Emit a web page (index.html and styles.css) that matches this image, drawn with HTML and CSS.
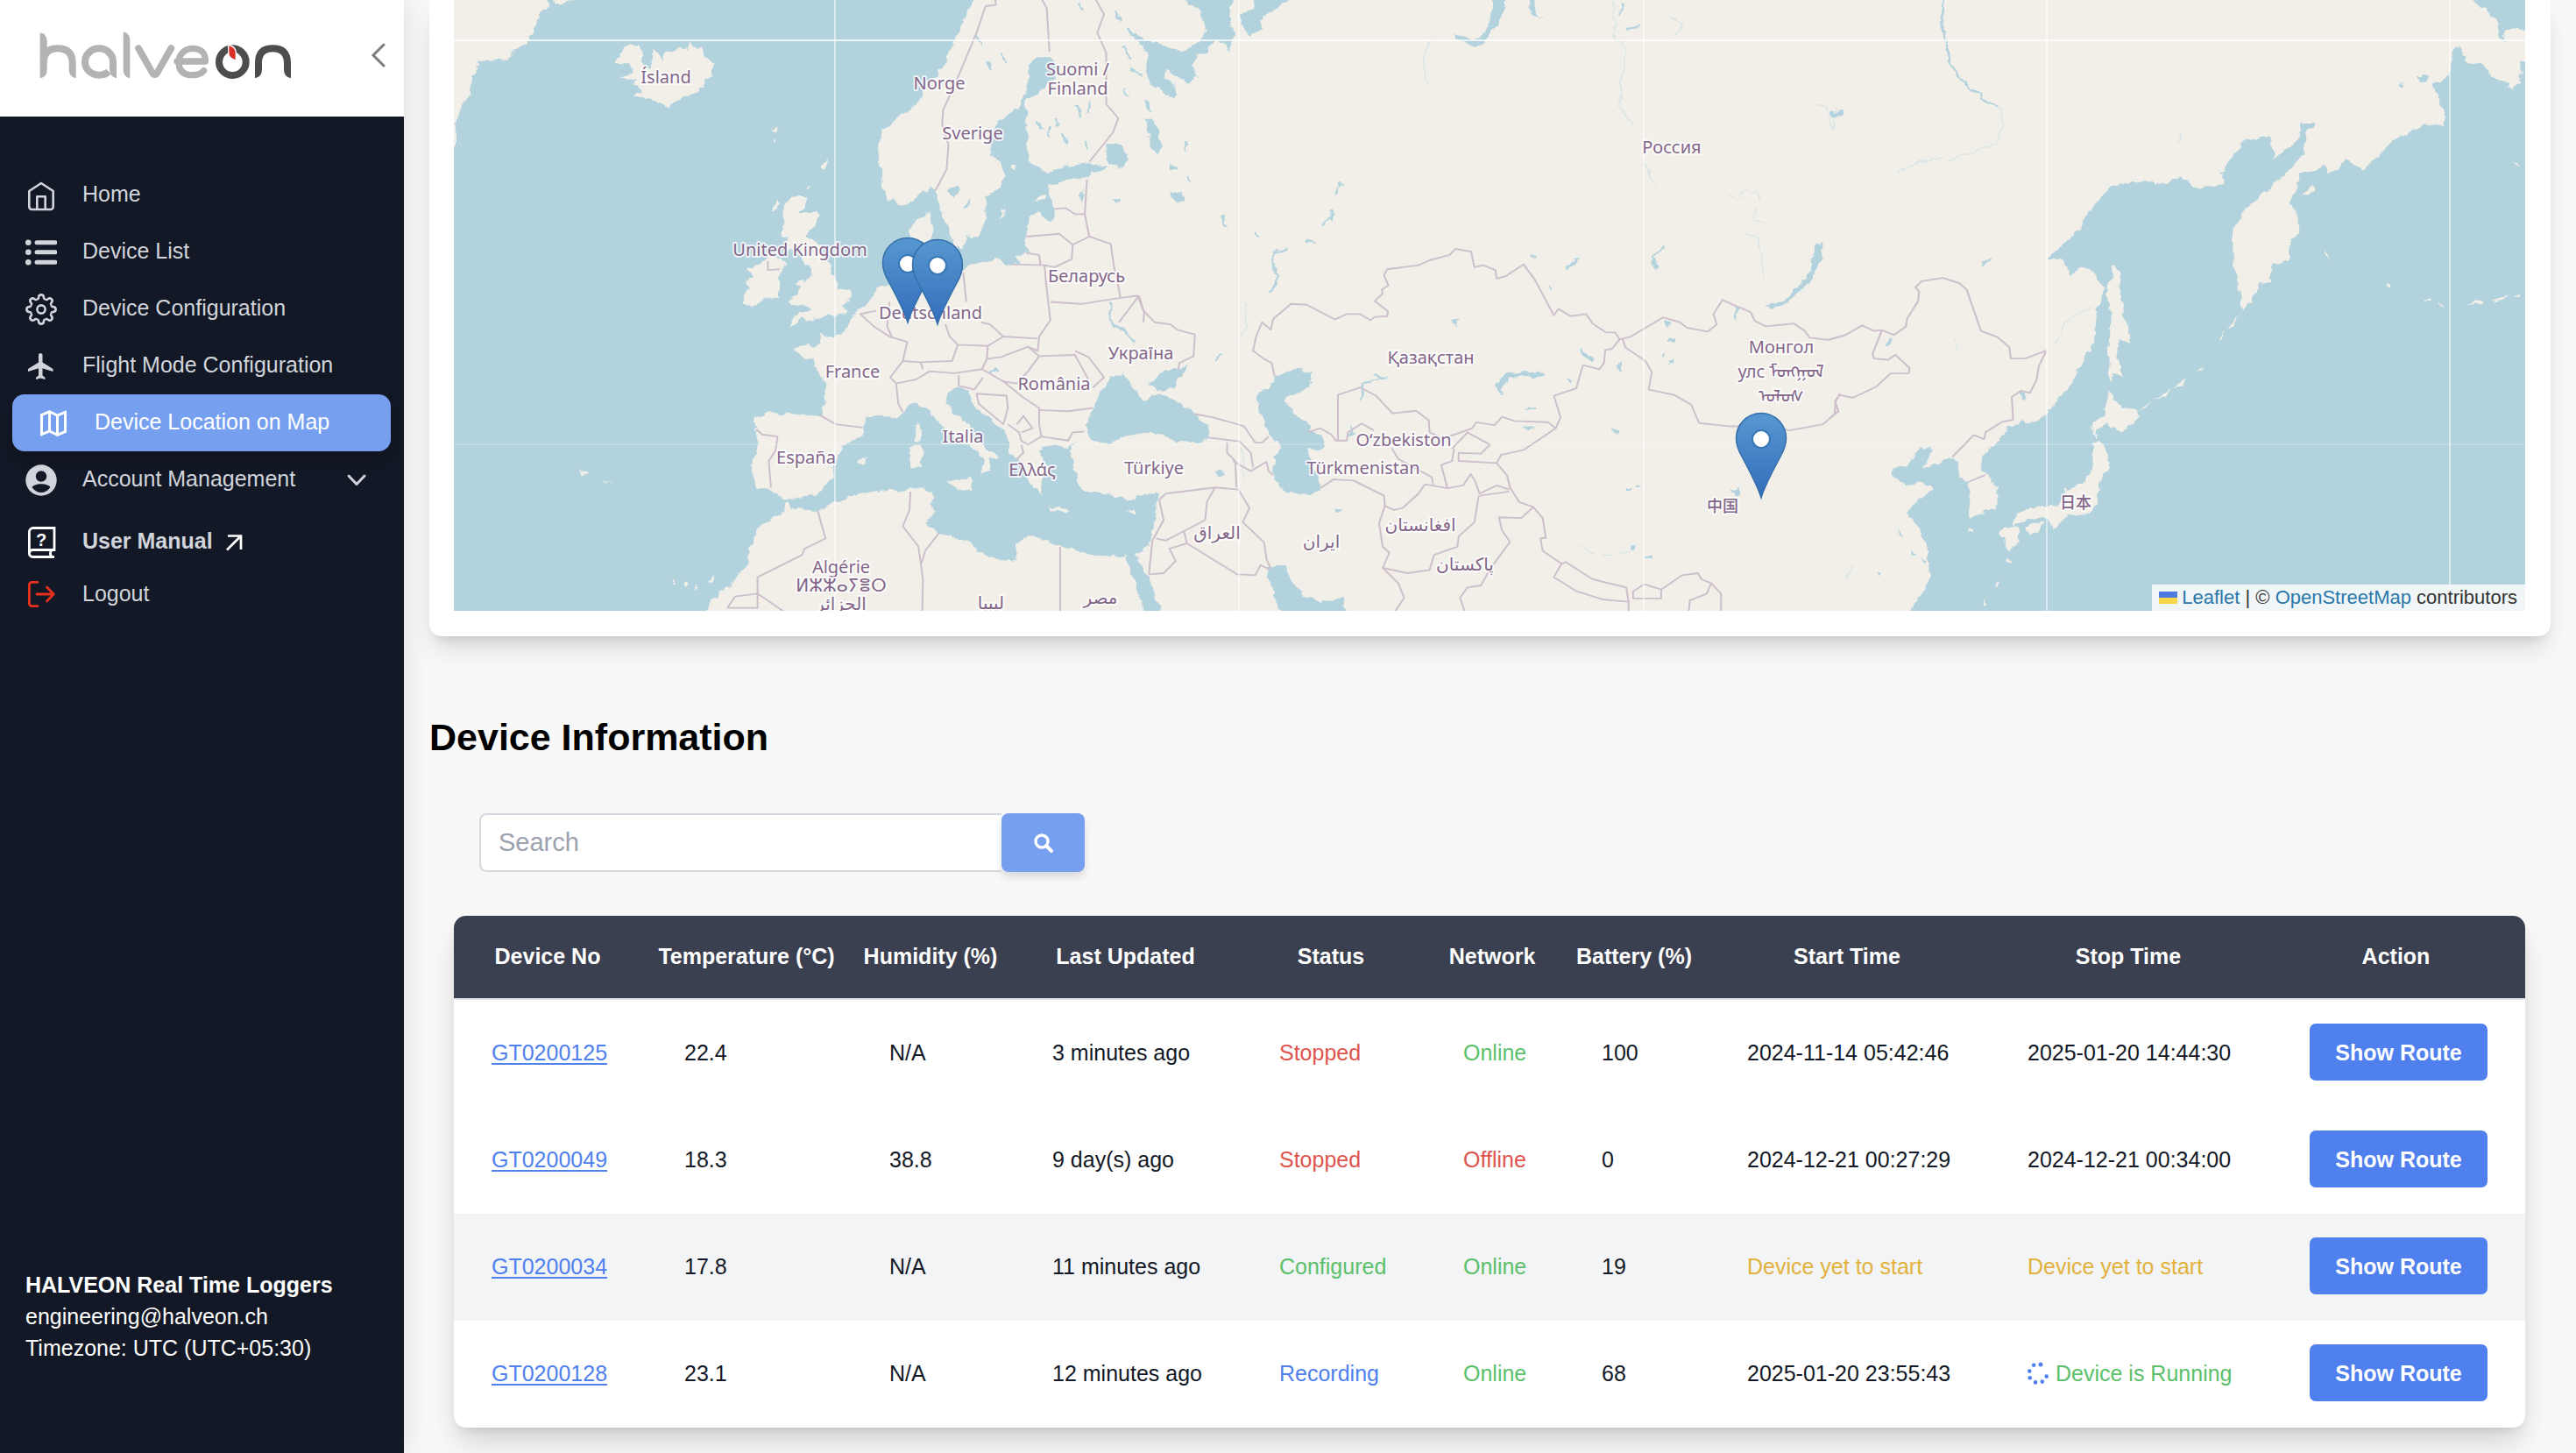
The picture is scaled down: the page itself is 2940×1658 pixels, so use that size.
FILE: index.html
```html
<!DOCTYPE html>
<html lang="en">
<head>
<meta charset="utf-8">
<meta name="viewport" content="width=device-width, initial-scale=1">
<title>Device Location on Map</title>
<link rel="stylesheet" href="styles.css">
</head>
<body>
<div class="app">
  <aside class="sidebar">
    <header class="brand">
      <svg class="logo" viewBox="132 105 870 171" role="img" aria-label="halveon" fill="none">
        <g stroke="#b3b3b3" stroke-width="24">
          <path d="M137 112Q161 116 161 142V240Q161 264 137 268Z" fill="#b3b3b3" stroke="none"/>
          <path d="M149 215Q149 166 198 166T248 215V240"/>
          <path d="M236 238H260V268Q236 264 236 238Z" fill="#b3b3b3" stroke="none"/>
          <path d="M372 245Q360 257 339 257A48 45 0 0 1 291 211A48 45 0 0 1 387 211V240"/>
          <path d="M375 236H399V268Q375 262 375 236Z" fill="#b3b3b3" stroke="none"/>
          <path d="M422 109Q445 114 445 140V268Q422 264 422 238Z" fill="#b3b3b3" stroke="none"/>
          <path d="M474 165L521 248Q530 263 539 248L586 165" stroke-width="23" stroke-linecap="round"/>
          <path d="M606 210H703Q704 166 659 166A47 46 0 0 0 612 212Q612 257 660 257Q684 257 698 242" stroke-width="22" stroke-linejoin="round" stroke-linecap="round"/>
        </g>
        <g stroke="#4d4d4d" stroke-width="24">
          <circle cx="796" cy="212" r="46"/>
          <path d="M885 240V215Q885 166 934 166T984 215V240"/>
          <path d="M873 238H897Q897 264 873 268ZM972 238H996V268Q972 264 972 238Z" fill="#4d4d4d" stroke="none"/>
        </g>
        <path d="M782 153Q808 160 808 182V207Q782 202 782 178Z" fill="#d93025" stroke="#fff" stroke-width="4"/>
      </svg>
      <button class="collapse" type="button" aria-label="Collapse sidebar">
        <svg width="18" height="28" viewBox="0 0 18 28" fill="none" stroke="#7d7d7d" stroke-width="3" stroke-linecap="round"><path d="M15 2L3 14L15 26"/></svg>
      </button>
    </header>

    <nav class="nav">
      <a class="item" href="#home">
        <svg class="icon" viewBox="0 0 36 36" fill="none" stroke="currentColor" stroke-width="2.6" stroke-linejoin="round"><path d="M4.3 13L18 4L31.7 13V31a3 3 0 0 1-3 3H7.3a3 3 0 0 1-3-3ZM13.300 34V19.300H22.700V34"/></svg>
        <span>Home</span>
      </a>
      <a class="item" href="#devices">
        <svg class="icon" viewBox="0 0 36 36" fill="none" stroke="currentColor" stroke-width="5" stroke-linecap="round"><path d="M13 6.700H34M13 17.700H34M13 29.300H34"/><path stroke-width="6.600" d="M3.300 6.700h.01M3.300 17.700h.01M3.300 29.300h.01"/></svg>
        <span>Device List</span>
      </a>
      <a class="item" href="#configuration">
        <svg class="icon" viewBox="-18 -18 36 36" fill="none" stroke="currentColor" stroke-width="2.600">
          <defs><path id="tooth" d="M-4.940-11.930C-3.200-11.300-3.100-12.800-2.900-14C-2.700-15.800-1.600-16.600 0-16.600S2.700-15.800 2.900-14C3.100-12.800 3.200-11.300 4.940-11.930"/></defs>
          <use href="#tooth"/><use href="#tooth" transform="rotate(45)"/><use href="#tooth" transform="rotate(90)"/><use href="#tooth" transform="rotate(135)"/><use href="#tooth" transform="rotate(180)"/><use href="#tooth" transform="rotate(225)"/><use href="#tooth" transform="rotate(270)"/><use href="#tooth" transform="rotate(315)"/>
          <circle r="4.600"/>
        </svg>
        <span>Device Configuration</span>
      </a>
      <a class="item" href="#flight">
        <svg class="icon" viewBox="0 0 24 24" fill="currentColor"><path d="M21 16v-2l-8-5V3.500c0-.83-.67-1.500-1.500-1.500S10 2.670 10 3.500V9l-8 5v2l8-2.500V19l-2 1.500V22l3.500-1 3.500 1v-1.500L13 19v-5.500l8 2.500z"/></svg>
        <span>Flight Mode Configuration</span>
      </a>
      <a class="item active" href="#map" aria-current="page">
        <svg class="icon" viewBox="0 0 24 24" fill="currentColor"><path d="M2 5l7-3 6 3 6.303-2.701a.5.5 0 0 1 .697.46V19l-7 3-6-3-6.303 2.701a.5.5 0 0 1-.697-.46V5zm14 14.395l4-1.714V5.033l-4 1.714v12.648zm-2-.131V6.736l-4-2v12.528l4 2zm-6-2.011V4.605L4 6.319v12.648l4-1.714z"/></svg>
        <span>Device Location on Map</span>
      </a>
      <a class="item" href="#account">
        <svg class="icon" viewBox="0 0 36 36"><circle cx="18" cy="18" r="17.700" fill="currentColor"/><circle cx="18" cy="13.500" r="6.200" fill="#121825"/><path d="M7.500 26C11 21 25 21 28.500 26C25.500 30 22 32 18 32S10.500 30 7.500 26Z" fill="#121825"/></svg>
        <span>Account Management</span>
        <svg class="caret" viewBox="0 0 24 24" fill="none" stroke="currentColor" stroke-width="3" stroke-linecap="round" stroke-linejoin="round"><path d="M3 7L12 16.500L21 7"/></svg>
      </a>
      <a class="item manual" href="#manual">
        <svg class="icon" viewBox="0 0 36 36" fill="none" stroke="#fff" stroke-width="2.800"><path d="M33 1.500V26.500H8a4 4 0 0 0-3.600 4V6a4.500 4.500 0 0 1 4.500-4.500ZM4.400 30.500a4 4 0 0 0 4 4H33M30 26.500Q27 30.500 30 34.500"/><text x="18" y="21.500" text-anchor="middle" fill="#fff" stroke="none" class="icon-mark">?</text></svg>
        <span>User Manual</span>
        <svg class="external" viewBox="0 0 20 20" fill="none" stroke="#fff" stroke-width="2.700"><path d="M2 18.500L18 2.500M3 2.500H18V18"/></svg>
      </a>
      <a class="item logout" href="#logout">
        <svg class="icon" viewBox="0 0 36 36" fill="none" stroke="#e8301f" stroke-width="2.800" stroke-linecap="round" stroke-linejoin="round"><path d="M14 4.400H7.400a3 3 0 0 0-3 3V28.600a3 3 0 0 0 3 3H14M13 18H32M24.500 10L32.300 18L24.500 26"/></svg>
        <span>Logout</span>
      </a>
    </nav>

    <footer class="about">
      <strong>HALVEON Real Time Loggers</strong>
      <span>engineering@halveon.ch</span>
      <span>Timezone: UTC (UTC+05:30)</span>
    </footer>
  </aside>

  <main class="main">
    <section class="map-card">
      <div class="map">
        <svg class="tiles" viewBox="518 0 2364 697" preserveAspectRatio="xMidYMid slice" role="img" aria-label="World map with device positions">
          <defs>
            <filter id="coast" filterUnits="userSpaceOnUse" x="480" y="-30" width="2440" height="760">
              <feTurbulence type="fractalNoise" baseFrequency="0.09" numOctaves="3" seed="4"/>
              <feDisplacementMap in="SourceGraphic" scale="9" xChannelSelector="R" yChannelSelector="G"/>
            </filter>
            <linearGradient id="pin" x1="0" y1="0" x2="0" y2="1"><stop offset="0" stop-color="#5697d0"/><stop offset="1" stop-color="#346dbb"/></linearGradient>
            <g id="marker">
              <path d="M0 0C-3-10-15-34-22-47C-26-54-28.500-60-28.500-68A28.500 28.500 0 0 1 28.500-68C28.500-60 26-54 22-47C15-34 3-10 0 0Z" fill="url(#pin)" stroke="#3470ab" stroke-width="1.500"/>
              <circle cy="-67" r="10" fill="#fff" stroke="#3a77b5" stroke-width="2"/>
            </g>
          </defs>
          <rect x="480" y="-30" width="2440" height="760" fill="#b2d2dd"/>
          <g filter="url(#coast)">
            <g transform="scale(.5102 .4655) translate(999.600 0)" class="land">
              <path d="M-30-60H222V0L228 15L205 35L200 60L182 95L160 115L135 145L100 150L70 150L65 175L55 190L52 235L35 265L22 300L18 360L-30 400ZM230-40L285-40L285 0L240 12Z"/>
              <path d="M395 118L412 103L430 112L440 135L432 150L445 170L458 165L462 125L475 130L482 150L490 125L505 130L520 115L538 125L543 100L560 120L570 115L580 140L597 155L595 185L580 195L575 210L550 230L520 242L495 262L465 250L440 238L415 240L432 222L432 212L415 208L425 195L388 190L418 180L410 155L380 155Z"/>
              <path d="M722 318L740 310L738 325ZM730 335L737 350L732 350ZM838 415L852 385L852 400L843 420ZM805 465L815 455L812 470Z"/>
              <path d="M770 480L806 482L800 505L785 520L833 522L825 550L808 570L800 585L825 590L840 625L860 650L872 690L875 705L903 708L905 725L890 745L880 752L898 760L890 772L850 775L832 782L808 788L790 783L780 795L762 803L768 790L785 768L815 762L812 750L785 750L765 742L785 722L788 700L778 692L815 685L812 655L800 640L790 610L760 620L755 600L765 580L750 575L752 520Z"/>
              <path d="M715 630L745 628L760 645L745 665L745 700L742 728L715 735L685 752L662 745L665 725L678 700L665 690L690 680L670 655L700 650ZM722 515L742 485L745 500L725 520Z"/>
              <path d="M1600-60H1180V0L1165 25L1150 60L1135 100L1120 135L1110 165L1090 195L1070 225L1045 260L1005 290L970 325L965 370L972 430L975 460L990 490L1020 505L1045 495L1065 470L1088 462L1098 475L1100 500L1115 540L1125 575L1135 600L1155 608L1165 580L1190 578L1205 540L1208 480L1235 460L1250 430L1240 405L1220 385L1215 350L1225 310L1250 285L1280 260L1300 210L1300 160L1320 140L1350 140L1372 165L1350 200L1325 225L1298 245L1295 290L1300 340L1298 395L1345 425L1390 408L1440 398L1475 410L1430 435L1400 437L1345 455L1345 480L1360 510L1358 535L1345 545L1325 520L1305 530L1295 555L1292 590L1300 620L1270 630L1285 645L1255 650L1230 632L1180 648L1155 660L1110 665L1080 640L1075 600L1085 570L1080 520L1050 540L1035 560L1035 590L1045 640L1030 690L985 700L965 700L955 725L940 750L905 770L900 800L880 815L865 828L835 820L840 845L778 852L780 868L820 885L830 915L845 930L848 970L840 1015L800 1020L720 1010L685 1025L698 1060L690 1110L682 1150L690 1198L725 1200L745 1215L760 1225L800 1215L830 1212L845 1190L868 1170L865 1140L885 1095L930 1068L935 1025L960 1015L1005 1025L1020 1010L1050 985L1075 1000L1100 1035L1140 1080L1190 1105L1200 1125L1195 1165L1215 1155L1210 1125L1238 1120L1205 1095L1180 1080L1165 1040L1125 1000L1115 965L1140 948L1165 955L1175 985L1215 1025L1250 1060L1260 1110L1290 1135L1300 1180L1330 1215L1330 1180L1350 1150L1335 1130L1325 1100L1350 1090L1390 1095L1405 1085L1425 1060L1395 1100L1400 1150L1420 1200L1470 1210L1530 1225L1600 1205Z"/>
              <path d="M760 1230L770 1245L830 1250L890 1220L960 1205L1050 1200L1065 1195L1090 1210L1085 1235L1090 1260L1072 1280L1100 1308L1170 1325L1185 1350L1250 1380L1270 1370L1275 1330L1310 1312L1360 1335L1440 1360L1500 1365L1600 1345V1560H560L590 1470L635 1430L675 1380L675 1350L700 1290L740 1265Z"/>
              <path d="M1035 1090L1060 1088L1065 1110L1058 1145L1040 1148ZM1045 1055L1058 1035L1058 1080L1048 1078ZM1120 1180L1175 1170L1172 1208L1130 1190ZM1345 1242L1395 1252L1390 1260L1350 1252ZM1520 1255L1550 1245L1540 1262ZM918 1128L942 1122L932 1138ZM508 1415L514 1430L508 1430ZM530 1428L540 1428L536 1440ZM552 1434L562 1440L554 1446ZM582 1428L600 1410L594 1428ZM290 1155L325 1155L300 1165ZM350 1178L368 1182L352 1184ZM1235 540L1250 508L1246 530ZM1308 492L1335 478L1332 495ZM1262 404L1274 404L1270 416ZM1120 610L1145 600L1145 640Z"/>
            </g>
            <path d="M1300-30H2100V730H1300Z" class="land"/>
            <path d="M2095-30H2920V730H2095Z" class="land"/>
            <g transform="scale(.5102 .4655) translate(999.600 0)" class="sea">
              <path d="M1475 355L1500 345L1530 390L1515 410L1480 400ZM1120 470L1145 450L1150 465L1130 485ZM1155 510L1172 485L1165 512ZM1410 480L1422 465L1424 495ZM1490 488L1504 488L1498 500Z"/>
              <path d="M1320 300l14 20M1350 310l-5 26M1378 325l8 30M1410 260l8 30M1440 250l-6 28M1360 290l5 18M1425 345l5 18M1510 110l20 35M1495 30l14 26M1530 170l25 20M1410 10l12 14M1515 215l10 20M1180 90l14 22M1210 150l8 22M1240 130l10 20" class="stream"/>
              <path d="M1484 740V785L1540 835M1218 910L1234 905" class="stream"/>
              <path d="M1520 1365L1545 1440L1568 1420" class="stream"/>
            </g>
            <path class="sea" transform="translate(1220 0) scale(.3333)" d="M398-90V0L455 40L468 80L470 105L445 145L420 165L380 174L330 160L285 145L240 120L200 92L195 100L240 150L272 185L262 230L275 290L310 300L350 338L370 325L365 300L325 265L335 240L375 265L420 285L440 262L422 215L450 185L480 170L497 137L540 155L557 180L555 145L568 110L550 80L560 0V-90Z"/>
            <g transform="scale(.5102 .4655) translate(2548 0)" class="sea">
              <path d="M-118 1040L-103 1000L-83 950L-58 920L-33 918L-20 945L-3 960L10 985L40 965L60 968L90 985L125 1015L155 1045L158 1070L135 1088L95 1085L50 1065L20 1060L-20 1065L-68 1085L-108 1080ZM20 940L50 912L108 898L85 930L78 950L40 958Z"/>
              <path d="M-10 1215L45 1208L38 1260L20 1340L-10 1360ZM-30 1350L-10 1350L30 1440L62 1530L20 1530L-5 1450Z"/>
              <path d="M255-60L360-60L335 0L310 20L280 40L275 75L245 82L228 60L230 35L258 20ZM790-60L820-60L822 20L800 60L775 95L770 112L735 108L710 95L708 80L740 95L765 90L790 40ZM870-20L885-20L885 30L902 42L875 35Z"/>
              <path d="M15 290L35 300L52 360L40 378L25 350ZM70 465L95 475L102 495L85 498ZM70 405h14v12h-14ZM10 245l12 10l6 20l-14-10Z"/>
              <path d="M345 905L385 910L383 950L345 965L325 980L355 1020L380 1045L380 1060L410 1070L418 1095L395 1102L380 1100L382 1145L405 1160L405 1205L362 1213L320 1200L300 1165L302 1120L318 1100L290 1060L275 1020L262 980L285 950L310 920Z"/>
              <path d="M465 1070L474 1045L482 1060ZM795 945L820 915L905 912L908 922L830 925L808 950L812 968ZM855 1050L885 1040L885 1048L865 1056ZM1402 748L1440 740L1475 700L1500 670L1512 600L1530 595L1522 650L1502 690L1472 717L1440 752L1415 756ZM285 1395L325 1385L345 1430L370 1460L420 1475L455 1462L472 1530L330 1530L300 1450Z"/>
              <path d="M985 855L1020 878L1015 888L990 870ZM1172 785L1194 788L1186 806ZM1332 750L1344 752L1337 790ZM955 925L968 930L965 944ZM1186 828h14v10h-14ZM1168 868l8-2v16ZM1186 880h10v8h-10ZM1068 890h10v18h-8ZM170 1155h22v8h-18ZM438 1248h18v8h-16ZM1325 1200l14-6l4 16l-12 4ZM1060 1055h14v10h-12ZM1090 1195h10v6h-10ZM1100 1335h12v14h-12ZM1134 1364h14v8h-14ZM1112 1190h12v6h-12ZM700 785l14-4l-4 18ZM914 694l10 18l-8-4Z"/>
              <path d="M330 610L300 620L298 655L312 680L290 720M435 515L430 540L410 550M455 450L440 480M185 865L170 885M525 915L550 925L500 945L495 980M985 635L955 660M1175 600L1150 630L1158 660M372 590L395 595M258 570L270 580M187 530l4 26M880 625l10 12M868 1003L888 1003M105 350v20M110 430l8 12M1085 10l-10 30M1090 70l30-4" class="stream"/>
              <path d="M240 745L238 800L225 830M230 1095L235 1190M990 1340l30 18M1040 1362l20-4M1070 1360l30-8M1315 480L1345 485L1350 465L1385 470L1388 490M1380 510L1378 540L1398 545M1360 575L1385 580L1395 640L1398 680M1060 0L1065 95L1088 120L1080 200L1075 262L1108 315M655 95L640 120L635 170L642 205M1130 400L1155 455M1510 250L1540 265L1550 320L1560 260M1190 40L1215 60L1200 90" class="brook"/>
            </g>
            <g transform="scale(.5421 .4719) translate(3855.400 0)" class="sea">
              <path d="M1350-60V0L1375 20L1400 50L1405 95L1418 100L1420 70L1530 75V-60Z"/>
              <path d="M1310 120L1325 112L1335 150L1375 155L1390 185L1435 215L1452 200L1450 150L1530 155V1550H130L165 1477L200 1420L208 1380L200 1310L175 1260L158 1240L180 1205L218 1185L190 1165L155 1175L130 1150L128 1130L160 1125L190 1080L210 1085L195 1138L215 1120L250 1110L270 1115L268 1155L290 1165L290 1250L325 1240L350 1220L348 1180L315 1125L320 1100L352 1070L372 1035L400 1015L425 1025L455 1000L515 910L520 890L552 840L560 750L575 700L550 655L525 645L500 670L490 630L458 622L520 555L560 490L590 450L640 438L700 445L735 427L770 455L830 445L818 420L865 345L925 330L930 385L985 340L990 295L1020 300L1000 320L995 375L920 460L870 510L848 550L843 605L855 680L865 755L895 710L900 685L925 685L930 640L965 630L962 600L985 560L980 510L965 490L990 420L1040 400L1045 420L1085 388L1120 412L1180 345L1250 300L1290 305L1297 285L1285 260L1265 205L1300 185Z"/>
              <path d="M315 630L338 628L318 645ZM115 835L125 815L130 825L120 840ZM398 945L412 950L408 968L400 965ZM1194 200h12v10h-10ZM1236 182h18v16h-12ZM0 270h22v10h-22ZM140 1280l8 20l-6-4ZM170 1330l10 10l-8 4ZM95 1380l12 6l-4 10ZM185 1350h14v10Z"/>
              <path d="M238-20L230 40L240 100L250 150L270 190L300 220L330 250L350 255" class="stream"/>
              <path d="M350 255L360 305L350 345L290 370L250 387L190 390L140 420M740 320L725 345M550 740L495 775L470 835M260 820V845M30 1400L45 1370" class="brook"/>
            </g>
            <g transform="scale(.5421 .4719) translate(3855.400 0)" class="land">
              <path d="M597 640L607 660L610 720L630 830L605 820L600 870L615 915L597 905L587 925L585 850L590 760L580 700ZM583 942L610 985L645 990L650 1010L610 1045L580 1025L552 1045L548 1025L575 1005ZM565 1060L585 1100L582 1135L565 1165L560 1220L540 1245L500 1245L470 1280L455 1250L410 1255L380 1270L390 1245L420 1228L470 1222L500 1185L530 1165L550 1130L552 1075ZM352 1285L375 1270L398 1280L390 1315L370 1340L365 1300ZM408 1275L447 1260L440 1275L415 1297ZM550 1045L556 1030L560 1060ZM288 1278h14v8h-12Z"/>
              <path d="M835 795L860 762L850 785ZM675 972L716 938L705 955ZM722 942L748 914L738 935ZM650 995L668 968L662 985ZM815 828L830 800L824 822ZM770 900L785 880L778 896ZM1036 602L1052 630L1042 622ZM992 478L1015 448L1015 462ZM1162 690h16v8h-10ZM1335 735L1372 728L1370 738ZM1385 728L1410 720L1430 714L1410 726ZM1250 724h12v5h-12ZM1278 732l16 12l-14-6ZM1440 714h10v4h-10ZM1435 388l14 14l-6-2ZM318 1465l10-20l-4 16ZM345 1415l8-10l-2 12ZM368 1355h10v6h-10ZM490 1180h6v14h-6Z"/>
            </g>
          </g>
          <g class="borders">
            <g transform="scale(.5102 .4655) translate(999.600 0)">
              <path d="M1225-20L1228 12L1205 15L1185 80L1145 185L1110 270L1108 305L1122 355L1118 415L1093 467M1327-10L1342 20L1348 127M1447-10L1470 35L1455 80L1475 130L1475 255L1502 290L1490 325L1437 397M1432 440L1427 525L1437 580L1400 600L1370 573L1297 580M1360 512L1385 510L1405 525L1427 525M1437 580L1485 598L1492 650L1507 730L1420 745L1350 740M1400 600L1398 635L1360 655L1337 650L1265 648M1337 650L1340 690L1350 785L1325 825L1322 860L1300 850M1507 730L1545 725L1560 765L1558 790M1295 620L1325 625L1328 650"/>
              <path d="M1155 668L1162 740M1115 795L1125 825L1143 845L1210 848L1245 825L1215 795L1195 790M1245 825L1322 830M1210 848L1208 880L1240 875L1300 850L1325 873L1300 910L1275 940L1245 935L1197 905L1208 880M1143 845L1130 885L1080 887L1060 888L1020 885L1030 838L990 825L955 800L925 770L960 762M990 740L985 800L995 825M1020 885L992 925L1005 940L1050 930L1080 910L1135 915L1197 905M1060 888L1065 905M1005 940L1010 990L1020 1010M835 1018L870 1040L930 1048M692 1052L705 1065L740 1070L735 1105L720 1130L725 1195"/>
              <path d="M1145 920V945L1180 955L1200 925M1185 965L1252 970L1255 1000L1245 1040L1190 990ZM1325 1005L1390 1008L1445 1000M1245 935L1290 975L1325 1000V1040L1330 1070L1300 1090L1285 1080L1280 1060L1255 1040M1275 1040L1290 1020L1310 1050L1285 1060M1285 1090L1290 1110L1275 1125M1330 1070L1390 1080L1400 1060L1425 1058M1325 873L1405 870L1435 930M1405 860L1435 875L1470 925L1445 950M718 640V662L745 660"/>
              <path d="M830 1253L847 1320L800 1345L795 1360L695 1415V1490L628 1490L645 1462L695 1455L755 1500M1037 1205L1035 1250L1020 1290L1055 1340L1065 1420L1063 1520M1100 1308L1070 1350L1062 1380M1372 1340V1520"/>
            </g>
            <g transform="scale(.5102 .4655) translate(2548 0)">
              <path d="M303 922L297 890L280 880L255 860L262 825L275 790L295 808L300 782L340 745L375 747L438 783L465 770L495 770L518 785L527 777L555 775L557 763L527 738L545 720L543 710L558 700L548 675L555 660L625 650L650 638L695 625L708 610L743 617L750 655L770 650L797 662L800 683L820 677L860 648L885 685L928 773L938 757L965 775L1000 770L1015 793L1045 815L1065 815L1075 832L1058 855L1043 858L1040 890L1030 905L993 895L978 952L928 970L943 1023L932 1050"/>
              <path d="M1075 832L1100 825L1172 778L1210 790L1225 803L1272 813L1292 795L1285 770L1305 735L1335 750L1368 765L1378 787L1402 800L1465 793L1490 812L1500 828L1540 833L1568 825M1082 832L1088 852L1133 885L1147 912L1140 955L1197 968L1235 992L1253 1037L1320 1045L1400 1045L1455 1055L1530 1040L1556 1015L1558 985L1568 965"/>
              <path d="M445 1080V968L495 950L530 970L567 1013L620 1007L648 1030L650 1060L680 1075L745 1050M445 1080H465L467 1060L498 1038L525 1055M378 1060L405 1050L430 1065L440 1080H465M565 1098L580 1125L655 1170L658 1190M745 1050L755 1035L795 1042L812 1022L840 1032L915 1035L932 1050M700 1100L735 1060L785 1090L765 1112L715 1110V1130L800 1135M932 1050L885 1085L860 1103L810 1115L800 1135L823 1165L830 1195L850 1230L882 1243L903 1270L910 1318L898 1320L903 1350L945 1382L955 1378L1015 1420L1090 1440L1095 1475L1040 1470L980 1450L928 1415L945 1382"/>
              <path d="M405 1197L435 1175L480 1178L548 1215L550 1240L570 1250L590 1245L625 1210L640 1187L690 1197L725 1190L742 1162L752 1180L762 1210L800 1190L828 1200M828 1205L762 1215M550 1240L537 1283L545 1340L560 1355L545 1392L600 1405L650 1397L660 1360L712 1340L715 1315L750 1280L760 1215M545 1392L580 1430L593 1465L560 1520M882 1243L855 1270L805 1268L812 1300L830 1328L785 1395L765 1435L735 1440L718 1465L735 1520M690 1197L676 1140L700 1130L705 1100"/>
              <path d="M125 1015L165 1023L235 1045L260 1085L275 1085L290 1070M158 1073L225 1082L250 1110L255 1145M197 1085V1110L215 1130L218 1195M210 1130L250 1155L285 1132L290 1155L300 1165M45 1225L60 1210L170 1195L222 1200L247 1245L232 1280L280 1330L285 1370L295 1395M170 1195L152 1230L148 1275L60 1325L38 1320M100 1300L107 1332L68 1345L82 1375L55 1405L22 1408M107 1332L220 1408L260 1410L272 1385L290 1395M22 1408L30 1325L55 1275L45 1225M0 725L10 762L35 790L70 795L85 808L125 820L122 873L90 890L88 905M-45 790L0 725"/>
              <path d="M1105 1450L1130 1432L1168 1445V1467L1105 1467ZM1168 1445L1215 1410L1250 1405L1258 1420L1280 1430L1270 1455L1232 1472L1228 1520M1280 1430L1302 1455V1520M1095 1475V1520"/>
            </g>
            <g transform="scale(.5421 .4719) translate(3855.400 0)">
              <path d="M-5 822L30 810L65 787L90 800L107 798L132 810L157 790L160 770L183 728L185 705L177 695L190 680L235 672L270 685L285 700L315 800L350 815L375 840L378 867L408 867L453 848L437 885L432 920L418 950L400 945L380 960L383 1015L360 1020L325 1045L322 1062L300 1052L255 1105M107 798L87 855L90 867L120 870L135 858L165 890L163 903L125 903L95 935L45 962L18 955L8 970L15 995L-2 1010M290 1165L325 1148"/>
            </g>
          </g>
          <g stroke="#fff" fill="none" stroke-width="2">
            <path d="M518 46H2882" opacity=".75"/>
            <path d="M953 0V697M1414 0V697M1876 0V697M2336 0V697M2796 0V697" opacity=".55"/>
            <path d="M518 507H2882" opacity=".2"/>
          </g>
          <g class="labels">
            <text x="760" y="95">Ísland</text>
            <text x="1072" y="102">Norge</text>
            <text x="1110" y="159">Sverige</text>
            <text x="1230" y="86">Suomi /</text>
            <text x="1230" y="108">Finland</text>
            <text x="913" y="292">United Kingdom</text>
            <text x="1062" y="364">Deutschland</text>
            <text x="1240" y="322">Беларусь</text>
            <text x="1302" y="410">Україна</text>
            <text x="973" y="431">France</text>
            <text x="1203" y="445">România</text>
            <text x="1099" y="505">Italia</text>
            <text x="920" y="529">España</text>
            <text x="1178" y="543">Ελλάς</text>
            <text x="1317" y="541">Türkiye</text>
            <text x="960" y="654">Algérie</text>
            <text x="960" y="675">ⵍⵣⵣⴰⵢⴻⵔ</text>
            <text x="960" y="696">الجزائر</text>
            <text x="1131" y="695">ليبيا</text>
            <text x="1256" y="689">مصر</text>
            <text x="1908" y="175">Россия</text>
            <text x="1633" y="415">Қазақстан</text>
            <text x="2033" y="403">Монгол</text>
            <text x="2033" y="431">улс ᠮᠣᠩᠭᠣᠯ</text>
            <text x="2033" y="459">ᠤᠯᠤᠰ</text>
            <text x="1602" y="509">Oʻzbekiston</text>
            <text x="1556" y="541">Türkmenistan</text>
            <text x="1389" y="615">العراق</text>
            <text x="1508" y="625">ایران</text>
            <text x="1621" y="606">افغانستان</text>
            <text x="1672" y="651">پاکستان</text>
            <text x="1966" y="584" class="cjk">中国</text>
            <text x="2369" y="580" class="cjk">日本</text>
          </g>
          <use href="#marker" x="1036" y="368"/>
          <use href="#marker" x="1070" y="370"/>
          <use href="#marker" x="2010" y="568"/>
        </svg>
        <p class="attribution">
          <svg class="flag" viewBox="0 0 21 14"><path fill="#4c7be1" d="M0 0h21v7H0z"/><path fill="#f8d648" d="M0 7h21v7H0z"/></svg>
          <span><a href="#leaflet">Leaflet</a> | © <a href="#osm">OpenStreetMap</a> contributors</span>
        </p>
      </div>
    </section>

    <h1 class="title">Device Information</h1>

    <div class="content">
      <form class="search" role="search">
        <input class="search-input" type="search" placeholder="Search" aria-label="Search">
        <button class="search-button" type="button" aria-label="Search devices">
          <svg width="22" height="22" viewBox="0 0 22 22" fill="none" stroke="#fff" stroke-linecap="round"><circle cx="9" cy="9" r="7" stroke-width="3.400"/><path d="M14.500 14.500L20 20" stroke-width="4"/></svg>
        </button>
      </form>

      <table class="devices">
        <colgroup>
          <col class="c-device"><col class="c-temp"><col class="c-hum"><col class="c-upd"><col class="c-status"><col class="c-net"><col class="c-bat"><col class="c-start"><col class="c-stop"><col class="c-action">
        </colgroup>
        <thead>
          <tr><th scope="col">Device No</th><th scope="col">Temperature (°C)</th><th scope="col">Humidity (%)</th><th scope="col">Last Updated</th><th scope="col">Status</th><th scope="col">Network</th><th scope="col">Battery (%)</th><th scope="col">Start Time</th><th scope="col">Stop Time</th><th scope="col">Action</th></tr>
        </thead>
        <tbody>
          <tr><td><a href="#GT0200125">GT0200125</a></td><td>22.4</td><td>N/A</td><td>3 minutes ago</td><td class="red">Stopped</td><td class="green">Online</td><td>100</td><td>2024-11-14 05:42:46</td><td>2025-01-20 14:44:30</td><td><button class="route" type="button">Show Route</button></td></tr>
          <tr><td><a href="#GT0200049">GT0200049</a></td><td>18.3</td><td>38.8</td><td>9 day(s) ago</td><td class="red">Stopped</td><td class="red">Offline</td><td>0</td><td>2024-12-21 00:27:29</td><td>2024-12-21 00:34:00</td><td><button class="route" type="button">Show Route</button></td></tr>
          <tr class="hovered"><td><a href="#GT0200034">GT0200034</a></td><td>17.8</td><td>N/A</td><td>11 minutes ago</td><td class="green">Configured</td><td class="green">Online</td><td>19</td><td class="amber">Device yet to start</td><td class="amber">Device yet to start</td><td><button class="route" type="button">Show Route</button></td></tr>
          <tr><td><a href="#GT0200128">GT0200128</a></td><td>23.1</td><td>N/A</td><td>12 minutes ago</td><td class="blue">Recording</td><td class="green">Online</td><td>68</td><td>2025-01-20 23:55:43</td><td class="green"><span class="running"><svg width="24" height="26" viewBox="-12 -13 24 26" fill="#4f80ee"><circle cx="-4.800" cy="-9.200" r="2.300"/><circle cx="3" cy="-10" r="2.500"/><circle cx="-9.700" cy="-2.400" r="2.300"/><circle cx="-9.200" cy="5.200" r="2.300"/><circle cx="-2.900" cy="10.400" r="2.300"/><circle cx="4.800" cy="9.600" r="2.300"/><circle cx="9.700" cy="3.600" r="2.300"/></svg>Device is Running</span></td><td><button class="route" type="button">Show Route</button></td></tr>
        </tbody>
      </table>
    </div>
  </main>
</div>
</body>
</html>
```
FILE: styles.css
```css
* { box-sizing: border-box; }

body {
  margin: 0;
  background: #f8f8f8;
  color: #121825;
  font: 25px/36px "Liberation Sans", Arial, sans-serif;
}

button, input { font: inherit; }

.app { display: flex; min-height: 100vh; }

/* Sidebar */
.sidebar {
  flex: none;
  display: flex;
  flex-direction: column;
  width: 461px;
  background: #121825;
  color: #d1d5db;
  box-shadow: 0 0 30px rgba(0, 0, 0, .12);
}
.brand {
  display: flex;
  align-items: flex-start;
  justify-content: space-between;
  height: 133px;
  padding: 35px 20px 0 44px;
  background: #fff;
}
.logo { width: 290px; height: 57px; }
.collapse {
  display: flex;
  margin-top: 14px;
  padding: 0;
  border: 0;
  background: none;
}
.nav { padding-top: 57px; }
.item {
  display: flex;
  align-items: center;
  gap: 29px;
  height: 65px;
  padding: 0 44px 0 29px;
  color: inherit;
  text-decoration: none;
  white-space: nowrap;
}
.item span { padding-bottom: 3px; }
.item.active {
  margin: 0 15px 0 14px;
  border-radius: 14px;
  background: #779fef;
  color: #fff;
  box-shadow: 0 10px 18px rgba(0, 0, 0, .2);
}
.icon { flex: none; width: 36px; height: 36px; }
.icon-mark { font: bold 20px "Liberation Sans", Arial, sans-serif; }
.caret { width: 24px; height: 24px; margin-left: auto; margin-right: -2px; }
.manual { margin-top: 6px; font-weight: bold; }
.external { width: 20px; height: 20px; margin-left: -15px; }
.logout { height: 54px; }
.about {
  display: flex;
  flex-direction: column;
  margin-top: auto;
  padding: 0 29px 102px;
  color: #fff;
}

/* Main column */
.main { flex: 1; min-width: 0; padding: 0 29px 29px; }

.map-card {
  padding: 0 29px 29px 28px;
  border-radius: 0 0 14px 14px;
  background: #fff;
  box-shadow: 0 18px 28px -6px rgba(0, 0, 0, .14), 0 8px 10px -4px rgba(0, 0, 0, .08);
}
.map { position: relative; overflow: hidden; }
.tiles { display: block; width: 100%; height: 697px; }
.land { fill: #f2efe9; }
.sea { fill: #b2d2dd; }
.stream { fill: none; stroke: #b2d2dd; stroke-width: 5; }
.brook { fill: none; stroke: #d9e5e4; stroke-width: 3; }
.borders { fill: none; stroke: #cdbfcb; stroke-width: 4; stroke-linejoin: round; }
.labels {
  fill: #84668a;
  stroke: rgba(255, 255, 255, .75);
  stroke-width: 4px;
  paint-order: stroke;
  stroke-linejoin: round;
  text-anchor: middle;
  font: 400 20px "Noto Sans", "DejaVu Sans", sans-serif;
}
.cjk { font: 500 18px "Noto Sans CJK SC", sans-serif; }
.attribution {
  position: absolute;
  right: 0;
  bottom: 0;
  display: flex;
  align-items: center;
  gap: 5px;
  margin: 0;
  padding: 0 9px 0 8px;
  background: rgba(255, 255, 255, .8);
  color: #333;
  font-size: 22px;
  line-height: 30px;
}
.attribution a { color: #2a78ab; text-decoration: none; }
.flag { width: 21px; height: 14px; }

.title {
  margin: 90px 0 62px;
  color: #000;
  font-size: 43px;
  line-height: 50px;
}
.content { padding: 0 29px 0 28px; }

.search { display: flex; width: 691px; height: 67px; margin: 0 0 50px 29px; }
.search-input {
  flex: 1;
  min-width: 0;
  padding: 0 20px 2px;
  border: 2px solid #d5d8de;
  border-right: 0;
  border-radius: 8px 0 0 8px;
  background: #fff;
  font-size: 29px;
}
.search-input::placeholder { color: #9ca3af; opacity: 1; }
.search-button {
  display: flex;
  align-items: center;
  justify-content: center;
  width: 95px;
  padding: 0;
  border: 0;
  border-radius: 8px;
  background: #779fef;
  box-shadow: 0 6px 10px rgba(0, 0, 0, .12);
}

/* Device table */
.devices {
  width: 100%;
  table-layout: fixed;
  border-spacing: 0;
  border-radius: 14px;
  overflow: hidden;
  background: #fff;
  white-space: nowrap;
  box-shadow: 0 20px 32px -4px rgba(0, 0, 0, .15), 0 6px 12px -4px rgba(0, 0, 0, .1);
}
.c-device { width: 220px; }
.c-temp { width: 234px; }
.c-hum { width: 186px; }
.c-upd { width: 259px; }
.c-status { width: 210px; }
.c-net { width: 158px; }
.c-bat { width: 166px; }
.c-start { width: 320px; }
.c-stop { width: 322px; }
.c-action { width: 289px; }
.devices th {
  height: 96px;
  padding: 0 6px 2px 0;
  border-bottom: 2px solid #e5e7eb;
  background: #3b4050;
  color: #fff;
}
.devices td { height: 122px; padding: 0 0 3px 43px; }
.devices td a { color: #4f80ee; text-underline-offset: 3px; }
.hovered td { background: #f2f4f6; }
.devices .red { color: #de544e; }
.devices .green { color: #5cc06a; }
.devices .amber { color: #e2b23c; }
.devices .blue { color: #4f80ee; }
.running { display: flex; align-items: center; gap: 8px; }
.route {
  width: 203px;
  height: 65px;
  padding: 0;
  border: 0;
  border-radius: 7px;
  background: #4f80ee;
  color: #fff;
  font-weight: bold;
}
```
